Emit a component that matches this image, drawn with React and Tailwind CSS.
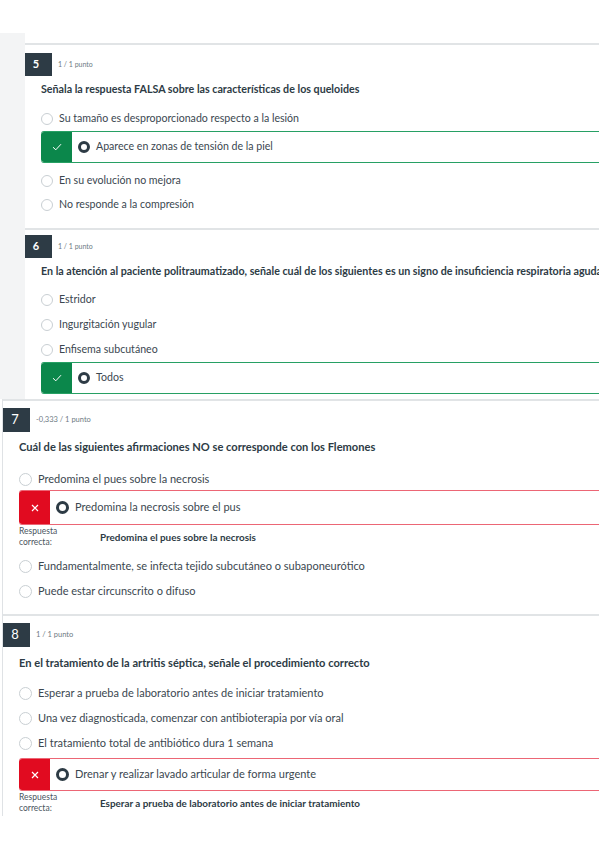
import React from "react";

const ink = "text-[#2d3b45]";

const Check = () => (
  <svg width="10" height="8" viewBox="0 0 10 8" fill="none" aria-hidden>
    <path d="M1 4.2 3.8 6.8 9 1.2" stroke="#fff" strokeWidth="1" />
  </svg>
);

const Cross = () => (
  <svg width="8" height="8" viewBox="0 0 8 8" fill="none" aria-hidden>
    <path d="M1 1l6 6M7 1 1 7" stroke="#fff" strokeWidth="1.2" />
  </svg>
);

const Radio = ({ big }) => (
  <span
    className={`shrink-0 rounded-full border border-[#c9cfd3] bg-white ${big ? "h-[13px] w-[13px]" : "h-[12px] w-[12px]"}`}
  />
);

const Picked = ({ big }) => (
  <span
    className={`shrink-0 rounded-full border-[3px] border-[#2d3b45] bg-white ${big ? "h-[13px] w-[13px]" : "h-[12px] w-[12px]"}`}
  />
);

// small = first capture (Q5, Q6), big = second capture (Q7, Q8)
const Option = ({ text, big, h }) => (
  <div className={`flex items-center whitespace-nowrap ${h} ${big ? "gap-[6px] text-[11px]" : "gap-[6px] text-[10.6px]"} text-[#3b4750]`}>
    <Radio big={big} />
    <span>{text}</span>
  </div>
);

const Answer = ({ text, ok, big, h }) => (
  <div
    className={`-mr-[20px] flex ${h} items-stretch whitespace-nowrap rounded-l-[3px] border-y border-r ${
      ok ? "border-[#27a064]" : "border-[#ec6675]"
    }`}
  >
    <div
      className={`flex w-[31px] shrink-0 items-center justify-center rounded-l-[3px] ${
        ok ? "bg-[#0b874b]" : "bg-[#e10b20]"
      }`}
    >
      {ok ? <Check /> : <Cross />}
    </div>
    <div className={`flex items-center gap-[6px] pl-[6px] ${big ? "text-[11px]" : "text-[10.6px]"} text-[#3b4750]`}>
      <Picked big={big} />
      <span>{text}</span>
    </div>
  </div>
);

const Header = ({ n, pts, big }) => (
  <div className="flex items-center">
    <div
      className={`flex items-center justify-center bg-[#2d3b45] text-white ${
        big ? "ml-[-3px] h-[24px] w-[30px] text-[13px]" : "ml-[-5px] h-[23px] w-[32px] text-[11px] font-bold"
      }`}
    >
      {n}
    </div>
    <span className={`ml-[6px] text-[#6e7a84] ${big ? "text-[7.5px]" : "text-[7px]"}`}>{pts}</span>
  </div>
);

const Question = ({ text, big, mt }) => (
  <p className={`${mt} h-[16px] whitespace-nowrap font-bold leading-[16px] ${ink} ${big ? "text-[11.1px]" : "text-[10.7px]"}`}>
    {text}
  </p>
);

const Correcta = ({ text }) => (
  <div className="flex h-[24px] items-center">
    <div className="w-[81px] shrink-0 text-[8.5px] leading-[11px] text-[#4a555e]">
      Respuesta
      <br />
      correcta:
    </div>
    <span className={`text-[9.9px] font-bold ${ink}`}>{text}</span>
  </div>
);

export default function App() {
  return (
    <div className="h-[848px] w-[599px] overflow-hidden bg-white" style={{ fontFamily: "Lato, 'Open Sans', sans-serif" }}>
      <div className="h-[33px]" />

      {/* first capture */}
      <div className="flex h-[366px]">
        <div className="w-[25px] shrink-0 bg-[#f3f4f5]" />
        <div className="min-w-0 flex-1 overflow-hidden pt-[10px]">
          <div className="border-t-2 border-[#e1e4e6] pt-[8px] pb-[11px]">
            <Header n="5" pts="1 / 1 punto" />
            <div className="pl-[16px]">
              <Question mt="mt-[5px]" text="Señala la respuesta FALSA sobre las características de los queloides" />
              <div className="mt-[10px]">
                <Option h="h-[24px]" text="Su tamaño es desproporcionado respecto a la lesión" />
                <Answer ok h="h-[32px]" text="Aparece en zonas de tensión de la piel" />
                <div className="mt-[6px]">
                  <Option h="h-[24px]" text="En su evolución no mejora" />
                  <Option h="h-[24px]" text="No responde a la compresión" />
                </div>
              </div>
            </div>
          </div>
          <div className="border-t-2 border-[#e1e4e6] pt-[5px]">
            <Header n="6" pts="1 / 1 punto" />
            <div className="pl-[16px]">
              <Question
                mt="mt-[5px]"
                text="En la atención al paciente politraumatizado, señale cuál de los siguientes es un signo de insuficiencia respiratoria aguda"
              />
              <div className="mt-[8px]">
                <Option h="h-[25px]" text="Estridor" />
                <Option h="h-[25px]" text="Ingurgitación yugular" />
                <Option h="h-[25px]" text="Enfisema subcutáneo" />
                <Answer ok h="h-[32px]" text="Todos" />
              </div>
            </div>
          </div>
        </div>
      </div>

      {/* second capture */}
      <div className="pl-[2px]">
        <div className="overflow-hidden border-l border-[#dfe2e5]">
          <div className="border-t-2 border-[#e1e4e6] pt-[7px] pb-[10px]">
            <Header big n="7" pts="-0,333 / 1 punto" />
            <div className="pl-[16px]">
              <Question big mt="mt-[7px]" text="Cuál de las siguientes afirmaciones NO se corresponde con los Flemones" />
              <div className="mt-[13px]">
                <Option big h="h-[22px]" text="Predomina el pues sobre la necrosis" />
                <Answer big h="h-[35px]" text="Predomina la necrosis sobre el pus" />
                <Correcta text="Predomina el pues sobre la necrosis" />
                <div className="mt-[5px]">
                  <Option big h="h-[25px]" text="Fundamentalmente, se infecta tejido subcutáneo o subaponeurótico" />
                  <Option big h="h-[25px]" text="Puede estar circunscrito o difuso" />
                </div>
              </div>
            </div>
          </div>
          <div className="border-t-2 border-[#e1e4e6] pt-[7px] pb-[1px]">
            <Header big n="8" pts="1 / 1 punto" />
            <div className="pl-[16px]">
              <Question big mt="mt-[8px]" text="En el tratamiento de la artritis séptica, señale el procedimiento correcto" />
              <div className="mt-[10px]">
                <Option big h="h-[25px]" text="Esperar a prueba de laboratorio antes de iniciar tratamiento" />
                <Option big h="h-[25px]" text="Una vez diagnosticada, comenzar con antibioterapia por vía oral" />
                <Option big h="h-[25px]" text="El tratamiento total de antibiótico dura 1 semana" />
                <div className="mt-[2px]">
                  <Answer big h="h-[33px]" text="Drenar y realizar lavado articular de forma urgente" />
                </div>
                <Correcta text="Esperar a prueba de laboratorio antes de iniciar tratamiento" />
              </div>
            </div>
          </div>
        </div>
      </div>
    </div>
  );
}
